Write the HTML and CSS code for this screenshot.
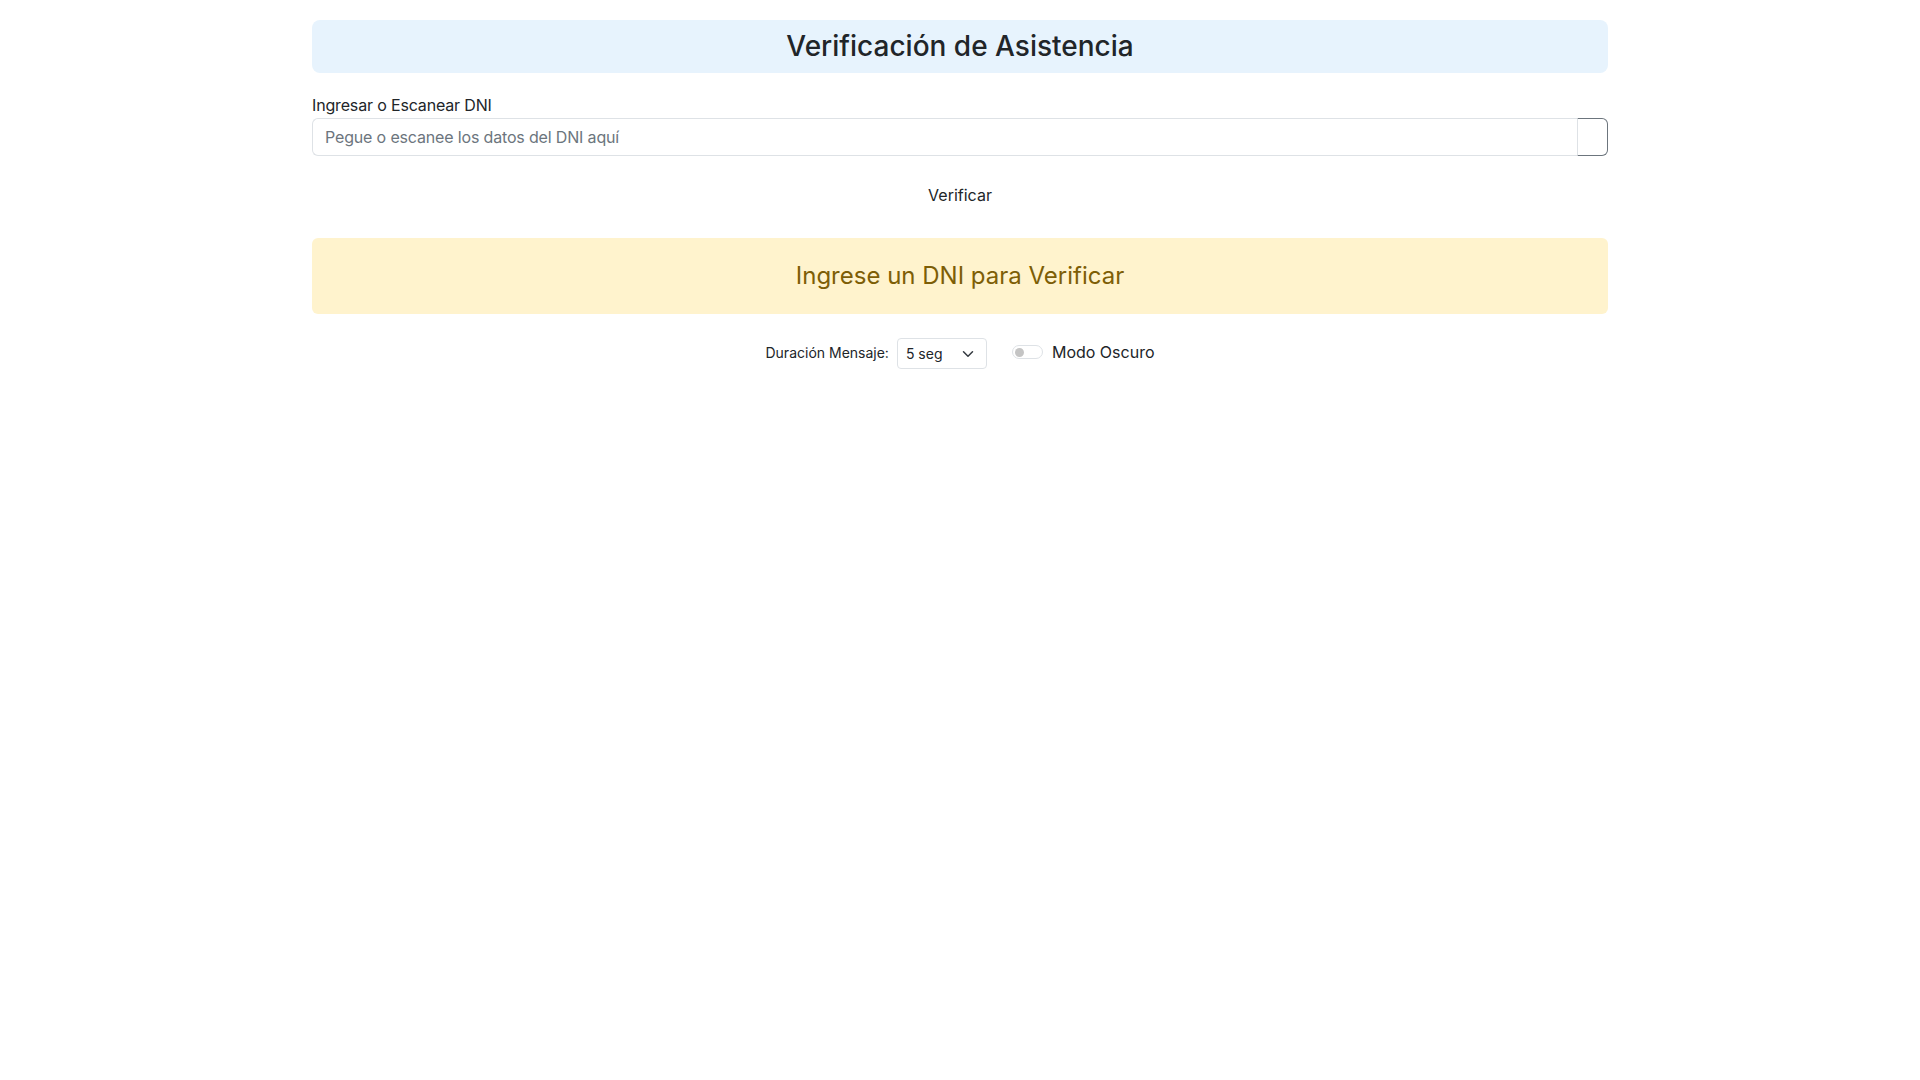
FILE: index.html
```html
<!DOCTYPE html>
<html lang="es">
<head>
<meta charset="utf-8">
<title>Verificación de Asistencia</title>
<link rel="stylesheet" href="styles.css">
</head>
<body>
<div class="container">
  <div class="title-box"><h1 class="title">Verificación de Asistencia</h1></div>
  <label class="field-label" for="dni">Ingresar o Escanear DNI</label>
  <div class="input-group">
    <input id="dni" class="field-input" type="text" placeholder="Pegue o escanee los datos del DNI aquí">
    <button class="field-btn" type="button" aria-label="Escanear"></button>
  </div>
  <div class="verify-row"><button class="verify-btn" type="button">Verificar</button></div>
  <div class="alert"><h2 class="alert-text">Ingrese un DNI para Verificar</h2></div>
  <div class="controls">
    <span class="ctrl-label">Duración Mensaje:</span>
    <div class="select">
      <span>5 seg</span>
      <svg class="chevron" width="16" height="16" viewBox="0 0 16 16"><path d="M2 5l6 6 6-6" fill="none" stroke="#343a40" stroke-width="2" stroke-linecap="round" stroke-linejoin="round"/></svg>
    </div>
    <label class="switch">
      <span class="track"><span class="knob"></span></span>
      <span class="switch-label">Modo Oscuro</span>
    </label>
  </div>
</div>
</body>
</html>
```
FILE: styles.css
```css
* { box-sizing: border-box; }
body {
  margin: 0;
  font-family: Inter, "Noto Sans", "Liberation Sans", sans-serif;
  font-size: 16px;
  line-height: 1.5;
  color: #212529;
  background: #fff;
}
.container {
  max-width: 1320px;
  margin: 0 auto;
  padding: 0 12px;
}
.title-box {
  margin-top: 20px;
  background: #e7f3fd;
  border-radius: 8px;
  height: 53px;
  display: flex;
  align-items: center;
  justify-content: center;
}
.title {
  margin: 0;
  font-size: 28px;
  font-weight: 500;
  line-height: 1.2;
  color: #212529;
}
.field-label {
  display: block;
  margin-top: 20px;
  line-height: 24px;
  letter-spacing: -0.01em;
}
.input-group {
  display: flex;
  margin-top: 1px;
  height: 38px;
}
.field-input {
  flex: 1;
  min-width: 0;
  height: 38px;
  padding: 6px 12px;
  border: 1px solid #dee2e6;
  border-right: none;
  border-radius: 6px 0 0 6px;
  font-family: inherit;
  font-size: 16px;
  letter-spacing: -0.01em;
  color: #212529;
  background: #fff;
  outline: none;
}
.field-input::placeholder { color: #6c757d; opacity: 1; }
.field-btn {
  width: 31px;
  height: 38px;
  border: 1px solid #6c757d;
  border-left-color: #dee2e6;
  border-radius: 0 6px 6px 0;
  background: #fff;
  padding: 0;
}
.verify-row {
  display: flex;
  justify-content: center;
  margin-top: 20px;
}
.verify-btn {
  font-family: inherit;
  font-size: 16px;
  line-height: 24px;
  padding: 6px 12px;
  border: 1px solid transparent;
  background: transparent;
  color: #212529;
}
.alert {
  margin-top: 24px;
  height: 76px;
  background: #fff3cd;
  border-radius: 6px;
  display: flex;
  align-items: center;
  justify-content: center;
}
.alert-text {
  margin: 0;
  font-size: 24px;
  font-weight: 400;
  line-height: 1.2;
  color: #7d5e06;
}
.controls {
  margin-top: 24px;
  display: flex;
  align-items: center;
  justify-content: center;
}
.ctrl-label {
  font-size: 14px;
  margin-right: 8px;
  margin-bottom: 2px;
}
.select {
  width: 90px;
  height: 31px;
  border: 1px solid #dee2e6;
  border-radius: 4px;
  padding: 0 8px;
  display: flex;
  align-items: center;
  justify-content: space-between;
  font-size: 14px;
}
.chevron { width: 12px; height: 12px; margin-right: 4px; }
.switch {
  display: flex;
  align-items: center;
  margin-left: 25px;
  margin-bottom: 3px;
}
.track {
  width: 31px;
  height: 14px;
  border: 1px solid #dee2e6;
  border-radius: 8px;
  display: flex;
  align-items: center;
  padding-left: 2px;
}
.knob {
  width: 9px;
  height: 9px;
  border-radius: 50%;
  background: #c4c4c4;
}
.switch-label {
  margin-left: 9px;
  font-size: 16px;
}
```
